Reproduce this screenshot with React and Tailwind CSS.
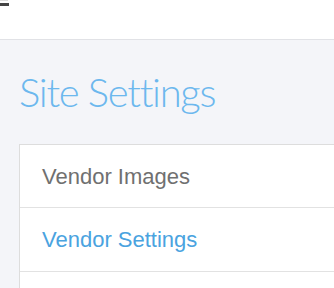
export default function App() {
  return (
    <div className="min-h-[288px] w-[334px] overflow-hidden bg-[#f4f5f9]" style={{ fontFamily: '"Liberation Sans", Arial, sans-serif' }}>
      <header className="relative h-10 border-b border-[#e1e2e6] bg-white">
        <div className="absolute left-0 top-0 h-[1px] w-[8px] bg-[#dcdcdc]" />
        <div className="absolute left-0 top-[3px] h-[3px] w-[9px] bg-[#444]" />
      </header>
      <main className="pl-[19px]">
        <h1
          className="mt-[27px] text-[40px] font-light leading-[50px] tracking-[-1.3px] text-[#6cb8ee]"
          style={{ fontFamily: 'Lato, "Liberation Sans", sans-serif' }}
        >
          Site Settings
        </h1>
        <div className="mt-[27px] border-l border-t border-[#dddddd] bg-white">
          <div className="flex h-[63px] items-center border-b border-[#e2e2e2] pl-[22px] text-[22px] text-[#707070]">
            Vendor Images
          </div>
          <div className="flex h-[64px] items-center border-b border-[#e2e2e2] pl-[22px] text-[22px] text-[#4aa3df]">
            Vendor Settings
          </div>
          <div className="h-[16px]" />
        </div>
      </main>
    </div>
  )
}
